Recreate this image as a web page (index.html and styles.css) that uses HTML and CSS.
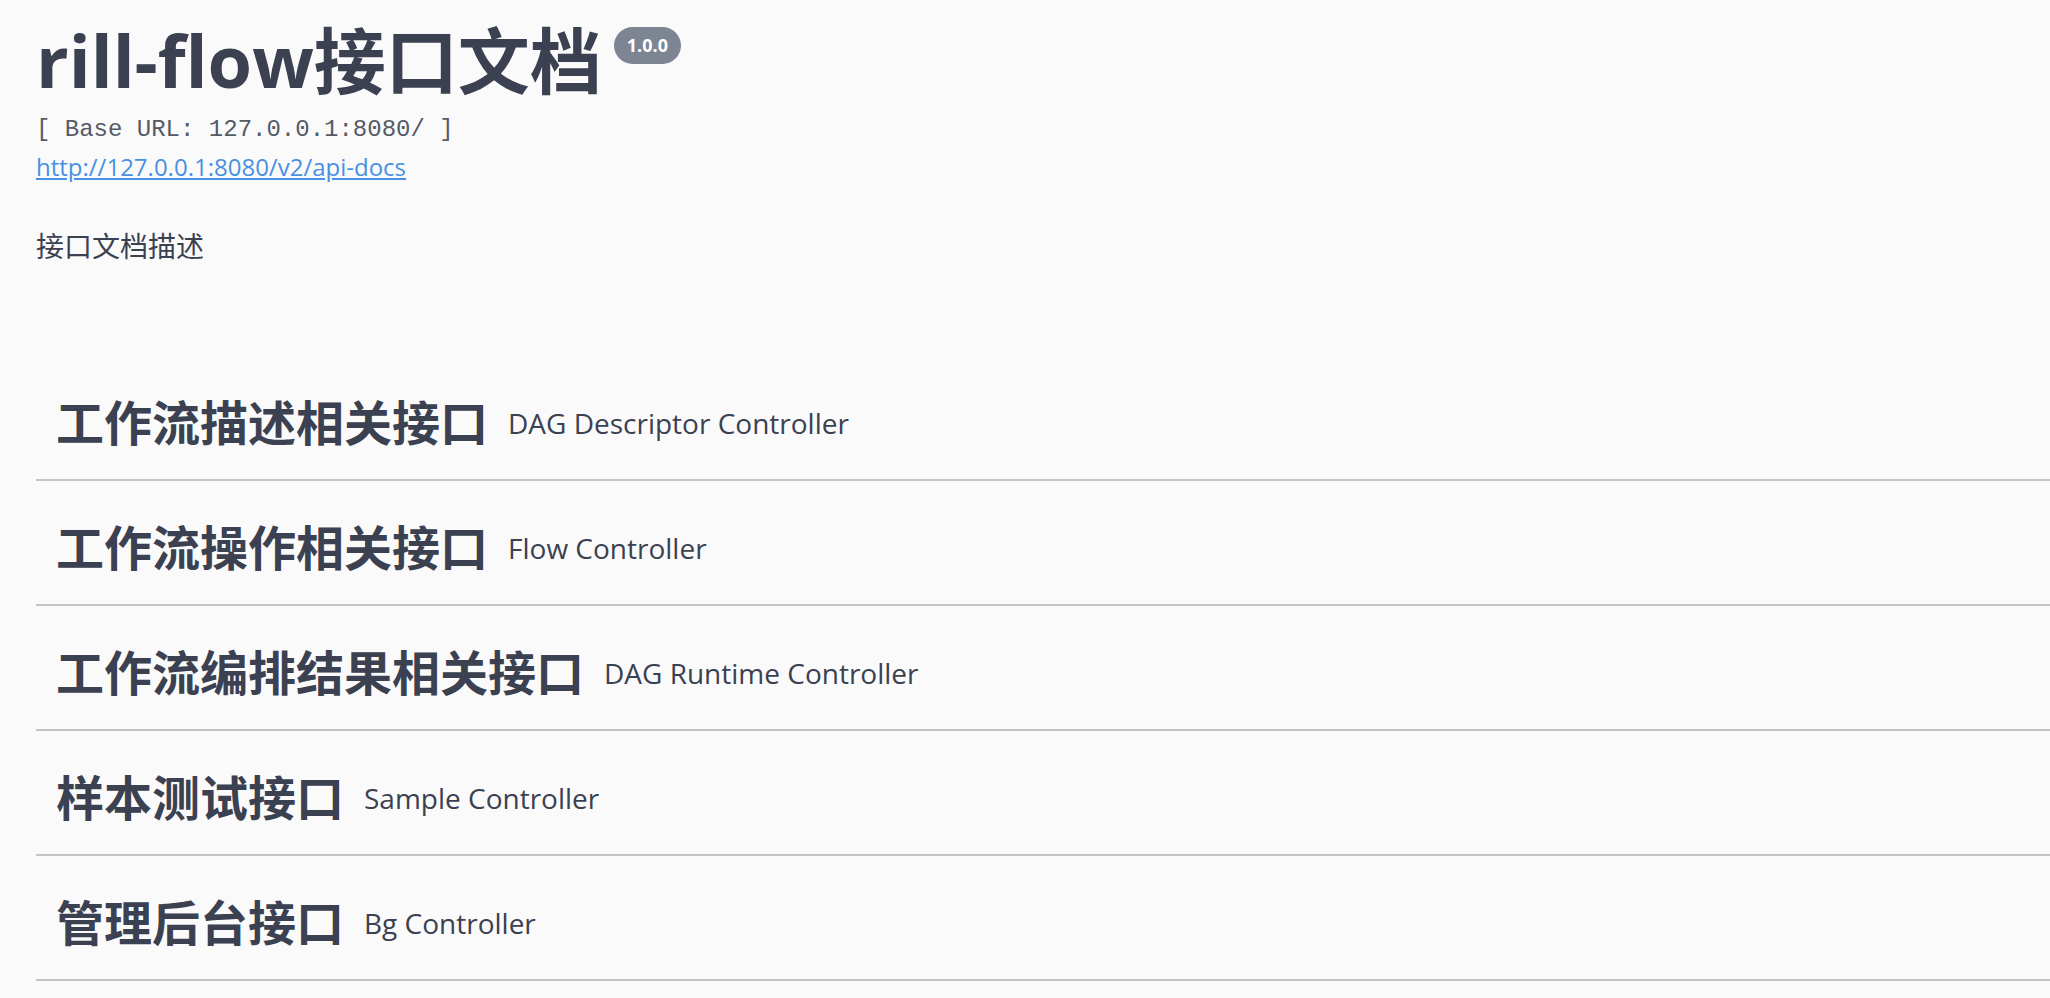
FILE: index.html
```html
<!DOCTYPE html>
<html lang="zh">
<head>
<meta charset="utf-8">
<title>rill-flow接口文档</title>
<link rel="stylesheet" href="styles.css">
</head>
<body>
<div class="page">
  <header class="info">
    <h2 class="title"><span class="title-text">rill-flow接口文档</span><span class="version">1.0.0</span></h2>
    <pre class="base-url">[ Base URL: 127.0.0.1:8080/ ]</pre>
    <a class="link" href="#">http://127.0.0.1:8080/v2/api-docs</a>
    <p class="desc">接口文档描述</p>
  </header>
  <section class="tags">
    <h4 class="tag"><span class="tag-name">工作流描述相关接口</span><small class="tag-desc">DAG Descriptor Controller</small></h4>
    <h4 class="tag"><span class="tag-name">工作流操作相关接口</span><small class="tag-desc">Flow Controller</small></h4>
    <h4 class="tag"><span class="tag-name">工作流编排结果相关接口</span><small class="tag-desc">DAG Runtime Controller</small></h4>
    <h4 class="tag"><span class="tag-name">样本测试接口</span><small class="tag-desc">Sample Controller</small></h4>
    <h4 class="tag"><span class="tag-name">管理后台接口</span><small class="tag-desc">Bg Controller</small></h4>
  </section>
</div>
</body>
</html>
```
FILE: styles.css
```css
html, body {
  margin: 0;
  background: #fafafa;
}
body {
  color: #3b4151;
  font-family: "Open Sans", "Noto Sans CJK SC", sans-serif;
}
.page {
  padding: 24px 0 0 36px;
}
.title {
  margin: 0;
  display: flex;
  align-items: flex-start;
  font-size: 72px;
  line-height: 72px;
  font-weight: 700;
}
.version {
  margin: 3px 0 0 12px;
  height: 37px;
  line-height: 37px;
  padding: 0 13px;
  border-radius: 19px;
  background: #7d8492;
  color: #fff;
  font-size: 18px;
  font-weight: 700;
}
.base-url {
  margin: 19px 0 0;
  font-family: "Liberation Mono", monospace;
  font-size: 24px;
  line-height: 30px;
  color: #555a66;
}
.link {
  display: block;
  width: fit-content;
  margin-top: 6px;
  font-size: 24px;
  line-height: 32px;
  color: #4990e2;
  text-decoration: underline;
}
.desc {
  margin: 43px 0 0;
  font-size: 28px;
  line-height: 40px;
}
.tags {
  margin-top: 100px;
}
.tag {
  margin: 0 0 10px;
  height: 113px;
  display: flex;
  align-items: center;
  padding-left: 20px;
  border-bottom: 2px solid #c1c3c7;
  font-size: 48px;
  line-height: 66px;
  font-weight: 700;
}
.tag-desc {
  padding-left: 20px;
  font-size: 28px;
  line-height: 38px;
  font-weight: 400;
}
```
